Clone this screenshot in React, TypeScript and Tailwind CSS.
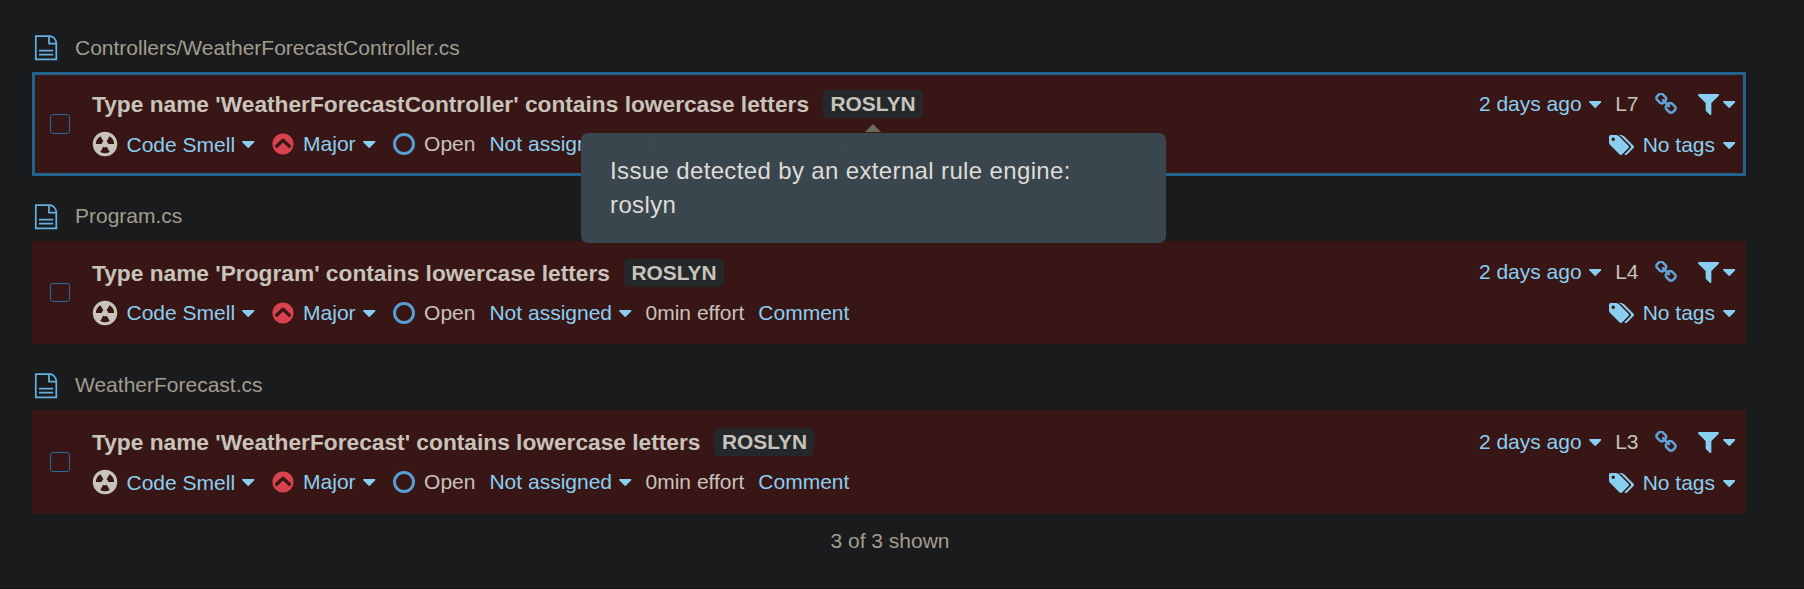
import React from "react";

const Caret = ({ className = "" }: { className?: string }) => (
  <svg viewBox="384 640 1024 576" className={`h-[7px] w-[12.5px] shrink-0 ${className}`} fill="#89cff0">
    <path d="M1408 704q0 26-19 45l-448 448q-19 19-45 19t-45-19l-448-448q-19-19-19-45t19-45 45-19h896q26 0 45 19t19 45z" />
  </svg>
);

const FileIcon = () => (
  <svg viewBox="0 0 28 28" className="h-7 w-7" fill="none" stroke="#66b0e0" strokeWidth="1.75">
    <path d="M2.8 3.2H17.4Q19.6 3.5 21.4 5.5Q23.2 7.4 23.3 9.8V26.4H2.8Z" />
    <path d="M16 3.2V10.5H23.3M6 17.5H20.2M6 21.5H20.2" />
  </svg>
);

const SmellIcon = () => (
  <svg viewBox="0 0 16 16" className="h-7 w-7 shrink-0" fill="#c8c3bb">
    <path
      fillRule="evenodd"
      d="M8 1a7 7 0 1 0 0 14A7 7 0 0 0 8 1ZM5.4 3.5L7.1 6.4A1.9 1.9 0 0 0 6.1 8H2.8A5.2 5.2 0 0 1 5.4 3.5ZM10.6 3.5A5.2 5.2 0 0 1 13.2 8H9.9A1.9 1.9 0 0 0 8.9 6.4ZM7 9.6A1.9 1.9 0 0 0 9 9.6L10.7 12.5A5.2 5.2 0 0 1 5.3 12.5Z"
    />
  </svg>
);

const MajorIcon = () => (
  <svg viewBox="0 0 22 22" className="h-[22px] w-[22px] shrink-0">
    <circle cx="11" cy="11" r="10.6" fill="#d8414e" />
    <path d="M4.6 13.2L11 7.3L17.4 13.2" fill="none" stroke="#381616" strokeWidth="3.2" strokeLinecap="round" strokeLinejoin="round" />
  </svg>
);

const LinkIcon = () => (
  <svg viewBox="70 70 1652 1652" className="h-[22px] w-[22px]" fill="#5fa3d6">
    <path d="M1520 1216q0-40-28-68l-208-208q-28-28-68-28-42 0-72 32 3 3 19 18.500t21.500 21.500 15 19 13 25.500 3.500 27.500q0 40-28 68t-68 28q-15 0-27.500-3.500t-25.500-13-19-15-21.500-21.500-18.500-19q-33 31-33 73 0 40 28 68l206 207q27 27 68 27 40 0 68-26l147-146q28-28 28-67zm-703-705q0-40-28-68l-206-207q-28-28-68-28-39 0-68 27l-147 146q-28 28-28 67 0 40 28 68l208 208q27 27 68 27 42 0 72-31-3-3-19-18.500t-21.500-21.500-15-19-13-25.500-3.500-27.500q0-40 28-68t68-28q15 0 27.500 3.500t25.500 13 19 15 21.500 21.500 18.500 19q33-31 33-73zm895 705q0 120-85 203l-147 146q-83 83-203 83-121 0-204-85l-206-207q-83-83-83-203 0-123 88-209l-88-88q-86 88-208 88-120 0-204-84l-208-208q-84-84-84-204t85-203l147-146q83-83 203-83 121 0 204 85l206 207q83 83 83 203 0 123-88 209l88 88q86-88 208-88 120 0 204 84l208 208q84 84 84 204z" />
  </svg>
);

const FilterIcon = () => (
  <svg viewBox="192 256 1408 1408" className="h-[21px] w-[21px]" fill="#89cff0">
    <path d="M1595 295q17 41-14 70l-493 493v742q0 42-39 59-13 5-25 5-27 0-45-19l-256-256q-19-19-19-45v-486l-493-493q-31-29-14-70 17-39 59-39h1280q42 0 59 39z" />
  </svg>
);

const TagsIcon = () => (
  <svg viewBox="128 128 1899 1515" className="h-5 w-[25px]" fill="#89cff0">
    <path d="M576 448q0-53-37.500-90.500t-90.500-37.500-90.500 37.500-37.500 90.500 37.500 90.500 90.500 37.500 90.500-37.500 37.500-90.500zm1067 576q0 53-37 90l-491 492q-39 37-91 37-53 0-90-37l-715-716q-38-37-64.500-101t-26.500-117v-416q0-52 38-90t90-38h416q53 0 117 26.500t102 64.500l715 714q37 39 37 91zm384 0q0 53-37 90l-491 492q-39 37-91 37-36 0-59-14t-53-45l470-470q37-37 37-90 0-52-37-91l-715-714q-38-38-102-64.500t-117-26.500h224q53 0 117 26.500t102 64.500l715 714q37 39 37 91z" />
  </svg>
);

const Badge = ({ tooltip }: { tooltip?: boolean }) => (
  <span className="relative ml-3.5 flex h-7 w-[100px] items-center rounded-[5px] bg-[#25282a] pl-[7.5px] text-[20.9px] leading-[28px] font-bold">
    ROSLYN
    {tooltip && (
      <span className="absolute top-[34px] left-[-242.5px] z-10 flex w-[585px] flex-col items-center font-normal">
        <svg viewBox="0 0 16 8" className="h-2 w-4" fill="#6e695f">
          <path d="M8 0L16 8H0Z" />
        </svg>
        <span className="mt-px h-[110px] w-full rounded-[7px] bg-[#3a464d]/[0.996] pt-[21px] pr-7 pl-[29.5px] text-[24px] leading-[34px] tracking-[0.36px] whitespace-normal text-[#dfdcd8]">
          Issue detected by an external rule engine: roslyn
        </span>
      </span>
    )}
  </span>
);

type Issue = { file: string; type: string; line: string; selected?: boolean; compact?: boolean };

const issues: Issue[] = [
  { file: "Controllers/WeatherForecastController.cs", type: "WeatherForecastController", line: "L7", selected: true },
  { file: "Program.cs", type: "Program", line: "L4", compact: true },
  { file: "WeatherForecast.cs", type: "WeatherForecast", line: "L3" },
];

const IssueCard = ({ issue }: { issue: Issue }) => (
  <section className="h-[169px]">
    <header className="flex h-12 items-start gap-3.5 pl-px text-[#a39c8f]">
      <div className={issue.selected ? "pt-[9px]" : "pt-[8.5px]"}><FileIcon /></div>
      <span className={`leading-6 ${issue.selected ? "pt-[12px]" : "pt-[11px]"}`}>{issue.file}</span>
    </header>
    <article
      className={`flex border-3 bg-[#381616] ${issue.compact ? "h-[103px]" : "h-[104px]"} ${issue.selected ? "border-[#21638f]" : "border-[#381616]"}`}
    >
      <div className="w-[57px] shrink-0 pt-[39px] pl-[15px]">
        <div className={`w-5 rounded-[3px] border border-[#286a9c] ${issue.compact ? "h-[19px]" : "h-5"}`} />
      </div>
      <div className="flex grow flex-col pt-[15px]">
        <div className="flex h-7 items-center">
          <h3 className="text-[22.72px] leading-[28px] font-bold">Type name '{issue.type}' contains lowercase letters</h3>
          <Badge tooltip={issue.selected} />
        </div>
        <div className="mt-3 flex h-7 items-center text-[#89cff0]">
          <div className="-ml-px flex items-center">
            <SmellIcon />
            <span className={`ml-[7.5px] ${issue.compact ? "" : "pt-px"}`}>Code Smell</span>
            <Caret className="ml-[7px]" />
          </div>
          <div className="ml-[17px] flex items-center"><MajorIcon /><span className="ml-[9.5px]">Major</span><Caret className="ml-[7.5px]" /></div>
          <div className="ml-[17px] flex items-center text-[#c8c3bb]">
            <span className="h-[22px] w-[22px] rounded-full border-3 border-[#559fd4]" />
            <span className="ml-[9.5px]">Open</span>
          </div>
          <div className="ml-3.5 flex items-center"><span>Not assigned</span><Caret className="ml-[7px]" /></div>
          <span className="ml-3.5 text-[#c8c3bb]">0min effort</span>
          <span className="ml-3.5">Comment</span>
        </div>
      </div>
      <div className={`flex flex-col items-end pr-2 text-[#89cff0] ${issue.compact ? "pt-[14px]" : "pt-[15px]"}`}>
        <div className="flex h-7 items-center">
          <span>2 days ago</span><Caret className="ml-[7px]" />
          <span className="ml-3.5 text-[#c8c3bb]">{issue.line}</span>
          <div className="ml-[16.5px]"><LinkIcon /></div>
          <div className="ml-[20.5px]"><FilterIcon /></div>
          <Caret className="ml-1" />
        </div>
        <div className="mt-[13px] flex h-7 items-center">
          <TagsIcon /><span className="ml-[8.5px]">No tags</span><Caret className="ml-[7.5px]" />
        </div>
      </div>
    </article>
  </section>
);

export default function App() {
  return (
    <main className="h-[589px] overflow-hidden border-b border-[#141415] bg-[#1a1b1c] pt-6 pr-[58px] pl-8 font-['Liberation_Sans',Arial,sans-serif] text-[21px] leading-[28px] whitespace-nowrap text-[#c8c3bb]">
      {issues.map((issue) => (
        <IssueCard key={issue.file} issue={issue} />
      ))}
      <footer className="-mt-1 pl-0.5 text-center text-[#a39c8f]">3 of 3 shown</footer>
    </main>
  );
}
